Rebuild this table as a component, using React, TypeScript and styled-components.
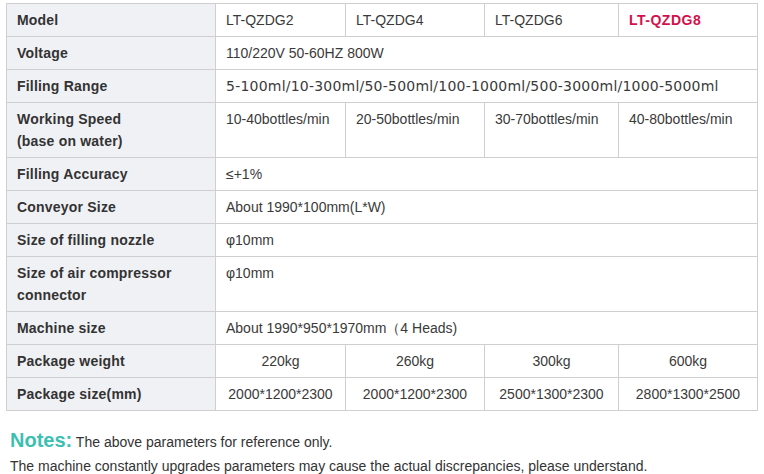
import React from "react";
import styled, { createGlobalStyle } from "styled-components";

const Global = createGlobalStyle`
  html, body { margin: 0; padding: 0; background: #fff; }
  body { font-family: "Liberation Sans", Arial, sans-serif; color: #333; }
`;

const Page = styled.div`
  padding: 3px 8px 0 6px;
`;

const Table = styled.table`
  width: 751px;
  border-collapse: collapse;
  table-layout: fixed;
  font-size: 14px;
  line-height: 22px;
`;

const Col = styled.col<{ $w: number }>`
  width: ${(p) => p.$w}px;
`;

const Label = styled.th`
  background: #f0f1f5;
  border: 1px solid #cfcfcf;
  padding: 5px 10px;
  text-align: left;
  vertical-align: top;
  font-weight: bold;
  color: #333;
  letter-spacing: 0.2px;
`;

const Cell = styled.td<{ $center?: boolean; $wide?: boolean; $accent?: boolean }>`
  border: 1px solid #cfcfcf;
  padding: 5px 10px;
  vertical-align: top;
  text-align: ${(p) => (p.$center ? "center" : "left")};
  color: ${(p) => (p.$accent ? "#d4104c" : "#3a3a3a")};
  font-weight: ${(p) => (p.$accent ? "bold" : "normal")};
  font-family: ${(p) => (p.$wide ? '"DejaVu Sans", Verdana, sans-serif' : '"Liberation Sans", Arial, sans-serif')};
  letter-spacing: ${(p) => (p.$wide ? "0.22px" : p.$accent ? "0.5px" : "0")};
  white-space: nowrap;
`;

const Notes = styled.div`
  margin-top: 17px;
  padding-left: 4px;
  font-size: 14px;
  line-height: 24px;
  color: #333;
`;

const NotesTitle = styled.span`
  font-size: 20px;
  font-weight: bold;
  color: #3bbfb1;
`;

type Row = { label: React.ReactNode; values: string[]; span?: boolean; center?: boolean; wide?: boolean };

const rows: Row[] = [
  { label: "Voltage", values: ["110/220V 50-60HZ 800W"], span: true },
  { label: "Filling Range", values: ["5-100ml/10-300ml/50-500ml/100-1000ml/500-3000ml/1000-5000ml"], span: true, wide: true },
  {
    label: (
      <>
        Working Speed
        <br />
        (base on water)
      </>
    ),
    values: ["10-40bottles/min", "20-50bottles/min", "30-70bottles/min", "40-80bottles/min"],
  },
  { label: "Filling Accuracy", values: ["≤+1%"], span: true },
  { label: "Conveyor Size", values: ["About 1990*100mm(L*W)"], span: true },
  { label: "Size of filling nozzle", values: ["φ10mm"], span: true },
  {
    label: (
      <>
        Size of air compressor
        <br />
        connector
      </>
    ),
    values: ["φ10mm"],
    span: true,
  },
  { label: "Machine size", values: ["About 1990*950*1970mm（4 Heads)"], span: true },
  { label: "Package weight", values: ["220kg", "260kg", "300kg", "600kg"], center: true },
  { label: "Package size(mm)", values: ["2000*1200*2300", "2000*1200*2300", "2500*1300*2300", "2800*1300*2500"], center: true },
];

const models = ["LT-QZDG2", "LT-QZDG4", "LT-QZDG6", "LT-QZDG8"];
const widths = [209, 130, 139, 134, 139];

export default function App() {
  return (
    <>
      <Global />
      <Page>
        <Table>
          <colgroup>
            {widths.map((w, i) => (
              <Col key={i} $w={w} />
            ))}
          </colgroup>
          <tbody>
            <tr>
              <Label>Model</Label>
              {models.map((m, i) => (
                <Cell key={m} $accent={i === 3}>
                  {m}
                </Cell>
              ))}
            </tr>
            {rows.map((r, idx) => (
              <tr key={idx}>
                <Label>{r.label}</Label>
                {r.span ? (
                  <Cell colSpan={4} $wide={r.wide}>
                    {r.values[0]}
                  </Cell>
                ) : (
                  r.values.map((v, i) => (
                    <Cell key={i} $center={r.center}>
                      {v}
                    </Cell>
                  ))
                )}
              </tr>
            ))}
          </tbody>
        </Table>
        <Notes>
          <NotesTitle>Notes:</NotesTitle> The above parameters for reference only.
          <br />
          The machine constantly upgrades parameters may cause the actual discrepancies, please understand.
        </Notes>
      </Page>
    </>
  );
}
